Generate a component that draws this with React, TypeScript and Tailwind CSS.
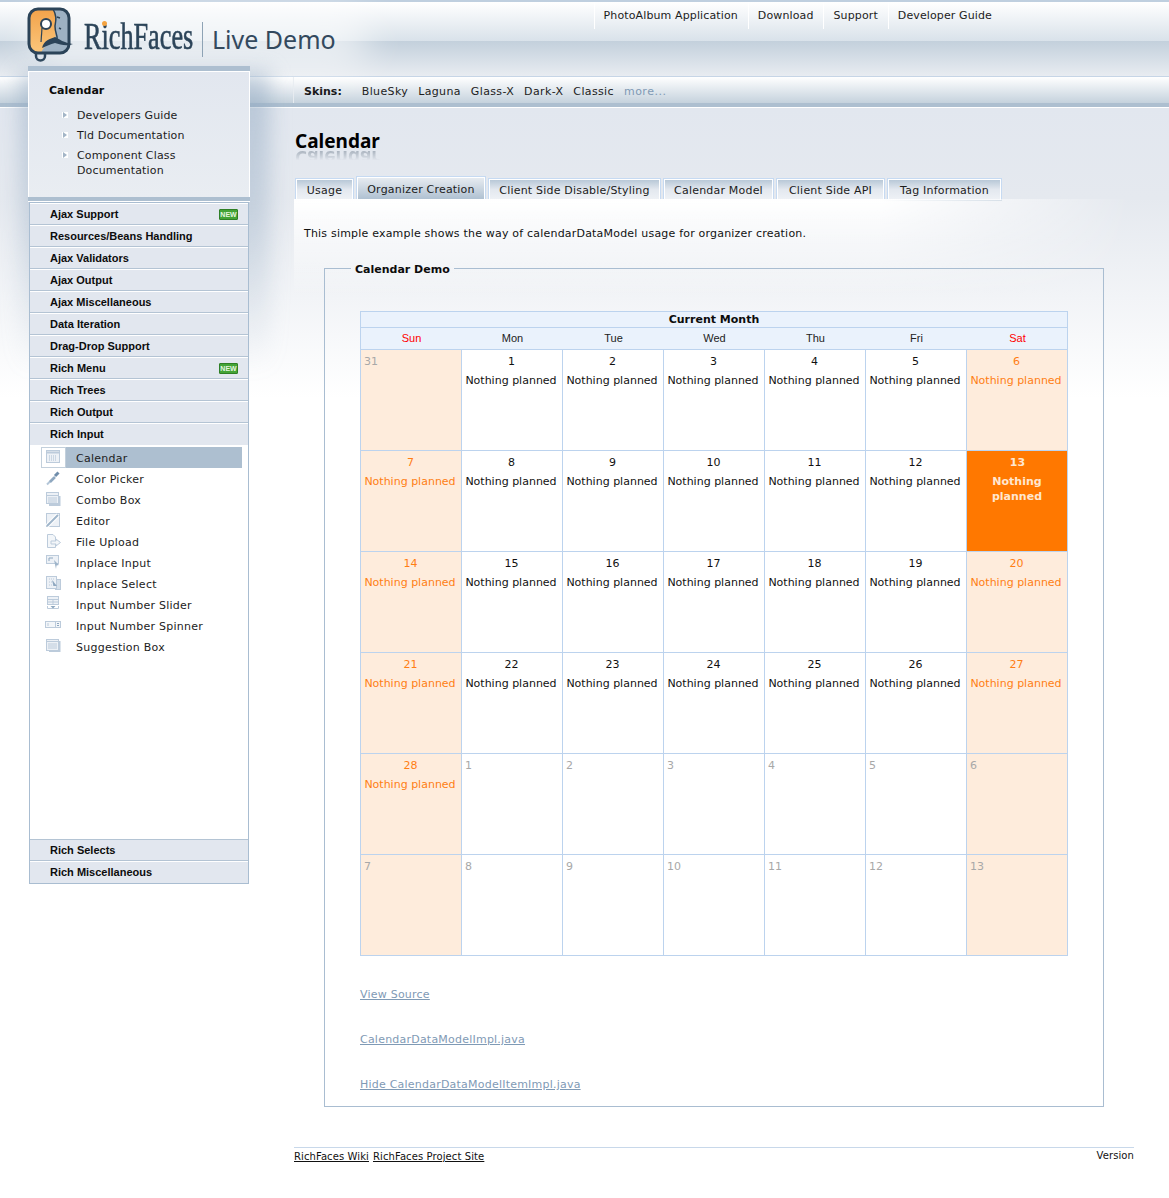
const topLinks = ['PhotoAlbum Application', 'Download', 'Support', 'Developer Guide']
const skins = ['BlueSky', 'Laguna', 'Glass-X', 'Dark-X', 'Classic']
const tabs = [
  { label: 'Usage', width: 'w-[59px]' },
  { label: 'Organizer Creation', width: 'w-[130px]' },
  { label: 'Client Side Disable/Styling', width: 'w-[173px]' },
  { label: 'Calendar Model', width: 'w-[111px]' },
  { label: 'Client Side API', width: 'w-[109px]' },
  { label: 'Tag Information', width: 'w-[115px]' },
]
const weekdays = ['Sun', 'Mon', 'Tue', 'Wed', 'Thu', 'Fri', 'Sat']

const groupsTop = [
  { name: 'Ajax Support', isNew: true },
  { name: 'Resources/Beans Handling' },
  { name: 'Ajax Validators' },
  { name: 'Ajax Output' },
  { name: 'Ajax Miscellaneous' },
  { name: 'Data Iteration' },
  { name: 'Drag-Drop Support' },
  { name: 'Rich Menu', isNew: true },
  { name: 'Rich Trees' },
  { name: 'Rich Output' },
]

const inputItems = [
  'Calendar',
  'Color Picker',
  'Combo Box',
  'Editor',
  'File Upload',
  'Inplace Input',
  'Inplace Select',
  'Input Number Slider',
  'Input Number Spinner',
  'Suggestion Box',
]

// six rows of the month grid, padded with the neighbouring months
const days = [
  31, 1, 2, 3, 4, 5, 6,
  7, 8, 9, 10, 11, 12, 13,
  14, 15, 16, 17, 18, 19, 20,
  21, 22, 23, 24, 25, 26, 27,
  28, 1, 2, 3, 4, 5, 6,
  7, 8, 9, 10, 11, 12, 13,
]

function Logo() {
  return (
    <svg width="50" height="58" viewBox="0 0 50 58" className="shrink-0">
      <defs>
        <linearGradient id="logoOrange" x1="0" y1="0" x2="0" y2="1">
          <stop offset="0" stopColor="#f2a24a" />
          <stop offset="1" stopColor="#fbc77c" />
        </linearGradient>
      </defs>
      <rect x="3" y="3" width="40" height="44" rx="9" fill="#9db1c3" />
      <path d="M12 3 H27 C31 10 30 14 29 20 C29 28 31 30 28 34 C22 38 18 40 15 47 H12 C6 47 3 44 3 38 V12 C3 6 6 3 12 3 Z" fill="url(#logoOrange)" />
      <path d="M27 3 C31 10 30 14 29 20 C29 28 32 30 31 33" fill="none" stroke="#2b4358" strokeWidth="1.5" />
      <path d="M31 11 l3 1 M33 22 l2 1" stroke="#2b4358" strokeWidth="1.5" />
      <rect x="3" y="3" width="40" height="44" rx="9" fill="none" stroke="#2b4358" strokeWidth="3" />
      <circle cx="20" cy="18" r="5" fill="#fff" stroke="#2b4358" strokeWidth="2" />
      <path d="M16 22 L15 36" stroke="#2b4358" strokeWidth="1.2" />
      <path d="M16 42 C18 34 24 33 29 31 C33 33 38 37 47 38 C40 41 34 38 29 37 C24 38 21 40 16 42 Z" fill="#2b4358" />
      <path d="M10 47 V50 C10 56 19 56 19 50 V47" fill="none" stroke="#2b4358" strokeWidth="2.5" />
    </svg>
  )
}

function MenuIcon({ index }: { index: number }) {
  const c = '#bccbdb'
  const fill = '#edf1f6'
  const shapes = [
    <g key="cal" fill="none" stroke={c}>
      <rect x="1.5" y="1.5" width="13" height="12" fill={fill} />
      <path d="M2 3.5 H14" strokeWidth="2" />
      <path d="M4 7 h8 M4 9 h8 M4 11 h8" strokeDasharray="1 1" stroke="#a9bdd1" />
    </g>,
    <g key="pick" fill="none">
      <path d="M2 14.5 L9 7.5" stroke="#b4c6d8" strokeWidth="2" />
      <path d="M5 12 L10 7" stroke="#8fa8c0" strokeWidth="2.5" />
      <path d="M10 6 L13.5 2.5" stroke="#6f8dab" strokeWidth="3" />
    </g>,
    <g key="combo" fill="none" stroke={c}>
      <rect x="1.5" y="1.5" width="12" height="11" fill={fill} />
      <path d="M1.5 4.5 H13.5 M3 7 H12 M3 9 H12 M3 11 H12" />
      <path d="M14.5 5 V14 H4" strokeWidth="2" />
    </g>,
    <g key="edit" fill="none" stroke={c}>
      <rect x="1.5" y="1.5" width="13" height="13" fill={fill} />
      <path d="M2 14 L13 3" stroke="#fff" strokeWidth="4" />
      <path d="M2 14 L13 3" stroke="#9fb5ca" strokeWidth="2" />
    </g>,
    <g key="upload" fill="none" stroke={c}>
      <path d="M2.5 1.5 H8 L10.5 4 V14.5 H2.5 Z" fill="#f3f6f9" />
      <path d="M6 8 H11 V6 L15.5 9.5 L11 13 V11 H6 Z" fill="#f3f6f9" />
    </g>,
    <g key="inplace" fill="none" stroke={c}>
      <rect x="1.5" y="1.5" width="12" height="8" fill={fill} />
      <path d="M4 7 V4 H8" stroke="#8fa8c0" />
      <path d="M9 6 L14 11 L11.5 11.5 L11 15 Z" fill="#9fb5ca" stroke="none" />
    </g>,
    <g key="select" fill="none" stroke={c}>
      <rect x="10.5" y="4.5" width="5" height="10" fill="#d6e0ea" />
      <rect x="1.5" y="1.5" width="10" height="12" fill={fill} />
      <path d="M4 4 H9 M4 7 H9 M4 10 H9" strokeDasharray="1 1" />
      <path d="M7 5 L12 11 L8.5 11 Z" fill="#8fa8c0" stroke="none" />
    </g>,
    <g key="slider" fill="none" stroke={c}>
      <rect x="2.5" y="0.5" width="11" height="8" fill={fill} />
      <path d="M2.5 3.5 H13.5 M8 3.5 V8.5 M2.5 6 H13.5" />
      <path d="M2.5 10 V12.5 H13.5 V10" />
      <path d="M5.5 10 H10.5 L8 12.5 Z" fill="#8fa8c0" stroke="none" />
    </g>,
    <g key="spinner" fill="none" stroke={c}>
      <rect x="0.5" y="4.5" width="15" height="6" fill="#f3f6f9" />
      <path d="M3 6 V9 M10.5 4.5 V10.5" />
      <path d="M12 6.5 H14 M12 8.5 H14" stroke="#8fa8c0" />
    </g>,
    <g key="suggest" fill="none" stroke={c}>
      <rect x="1.5" y="1.5" width="12" height="11" fill={fill} />
      <path d="M1.5 3.5 H13.5 M3 6 H12 M3 8 H12 M3 10 H12" />
      <path d="M14.5 3 V13 H4" strokeWidth="2" />
    </g>,
  ]
  return (
    <svg width="16" height="16" viewBox="0 0 16 16">
      {shapes[index]}
    </svg>
  )
}

function NewBadge() {
  return (
    <span className="flex h-[11px] w-[19px] items-center justify-center rounded-[1px] border border-[#2f7f25] bg-[#43a436] font-['Liberation_Sans',sans-serif] text-[7px] leading-none font-bold text-[#e6f6e0]">
      NEW
    </span>
  )
}

function GroupRow({ name, isNew, last, topLine }: { name: string; isNew?: boolean; last?: boolean; topLine?: boolean }) {
  return (
    <div
      className={`flex h-[22px] items-center justify-between border-t bg-[#e2e7ef] pr-[10px] pl-[20px] ${topLine ? 'border-t-[#b4c4d4]' : 'border-t-white'} ${last ? '' : 'border-b border-b-[#b4c4d4]'}`}
    >
      <span className="font-['Liberation_Sans',sans-serif] text-[11px] font-bold text-[#0c0c0c]">{name}</span>
      {isNew && <NewBadge />}
    </div>
  )
}

function Sidebar() {
  return (
    <aside className="relative z-10 mt-[-42px] ml-[28px] w-[222px] shrink-0">
      <div className="absolute top-[6px] right-[-20px] left-[-8px] -z-10 h-[300px] bg-gradient-to-b from-[#8ea6bf]/50 via-[#8ea6bf]/35 to-transparent blur-[10px]" />
      <div className="h-[5px] bg-[#adbfd0]" />
      <div className="h-[126px] border border-white border-b-0 bg-gradient-to-b from-[#e2e7ef] to-[#e9edf2] pt-[12px] pl-[20px]">
        <div className="text-[11px] leading-[14px] font-bold text-[#0c0c0c]">Calendar</div>
        <ul className="mt-[10px] flex flex-col gap-[5px] pl-[13px] text-[11px] leading-[15px] tracking-[.15px] text-[#1c1c1c]">
          {['Developers Guide', 'Tld Documentation', 'Component Class Documentation'].map((t) => (
            <li key={t} className="flex">
              <span className="mt-[4px] mr-[9px] flex h-[6px] w-[6px] shrink-0 items-center justify-center bg-white">
                <span className="h-0 w-0 border-y-[3px] border-l-[4px] border-y-transparent border-l-[#a3b5c7]" />
              </span>
              <span className="w-[130px]">{t}</span>
            </li>
          ))}
        </ul>
      </div>
      <div className="h-[4px] bg-[#adbfd0]" />
      <div className="h-[1px] bg-white" />
      <nav className="ml-[1px] w-[220px] border border-[#a9bdd1] bg-white">
        {groupsTop.map((g) => (
          <GroupRow key={g.name} name={g.name} isNew={g.isNew} />
        ))}
        <GroupRow name="Rich Input" last />
        <div className="h-[394px] pt-[2px]">
          {inputItems.map((item, i) => (
            <div key={item} className="ml-[11px] flex h-[21px] items-center text-[11px] tracking-[.25px] text-[#1c1c1c]">
              <span className={`flex h-[21px] w-[25px] shrink-0 items-center pb-[1px] ${i === 0 ? 'border border-[#c3d0dc] bg-white pl-[3px]' : 'pl-[4px]'}`}>
                <MenuIcon index={i} />
              </span>
              <span className={`mr-[6px] flex h-[21px] flex-1 items-center pt-[4px] pl-[10px] ${i === 0 ? 'bg-[#adbfd0]' : ''}`}>{item}</span>
            </div>
          ))}
        </div>
        <GroupRow name="Rich Selects" topLine />
        <GroupRow name="Rich Miscellaneous" last />
      </nav>
    </aside>
  )
}

function Calendar() {
  return (
    <div className="w-[708px] border-t border-l border-[#bcd3ee] bg-white">
      <div className="flex h-[16px] items-center justify-center border-r border-b border-[#bcd3ee] bg-[#eaf2fc] pt-[2px] text-[11px] font-bold text-[#0c0c0c]">
        Current Month
      </div>
      <div className="grid grid-cols-[repeat(7,101px)] border-r border-b border-[#bcd3ee] bg-[#eaf2fc]">
        {weekdays.map((d, i) => (
          <div
            key={d}
            className={`flex h-[21px] items-center justify-center pb-[1px] font-['Liberation_Sans',sans-serif] text-[11px] ${i === 0 || i === 6 ? 'text-[#ff0000]' : 'text-[#222222]'}`}
          >
            {d}
          </div>
        ))}
      </div>
      <div className="grid grid-cols-[repeat(7,101px)]">
        {days.map((n, i) => {
          const col = i % 7
          const weekend = col === 0 || col === 6
          const inMonth = i >= 1 && i <= 28
          const today = i === 13
          let tone = 'bg-white text-[#111111]'
          if (weekend && inMonth) tone = 'bg-[#feecdc] text-[#ff7e14]'
          if (weekend && !inMonth) tone = 'bg-[#feecdc] text-[#a8a8a8]'
          if (!weekend && !inMonth) tone = 'bg-white text-[#a8a8a8]'
          if (today) tone = 'bg-[#ff7800] text-[#ffe7d0] font-bold'
          return (
            <div
              key={i}
              className={`h-[101px] border-r border-b border-[#bcd3ee] pt-[5px] text-[11px] ${tone} ${inMonth ? 'pr-[3px] text-center' : 'pl-[3px]'} ${today ? 'pl-[3px]' : inMonth ? 'pl-[1px]' : ''}`}
            >
              <div className={`h-[14px] leading-[14px] ${inMonth ? 'pl-[1px]' : ''}`}>{n}</div>
              {inMonth && <div className="mt-[4px] leading-[15px]">Nothing planned</div>}
            </div>
          )
        })}
      </div>
    </div>
  )
}

function Content() {
  return (
    <main className="ml-[44px] w-[840px]">
      <div className="pl-[1px]">
        <h1 className="pt-[21px] font-['Noto_Sans',sans-serif] text-[19px] leading-[24px] font-bold text-black">Calendar</h1>
        <div
          aria-hidden="true"
          className="-mt-[7px] h-[24px] -scale-y-100 bg-gradient-to-t from-[#9aa5b1] from-10% to-transparent to-60% bg-clip-text font-['Noto_Sans',sans-serif] text-[19px] leading-[24px] font-bold text-transparent"
        >
          Calendar
        </div>
      </div>
      <div className="relative mt-[6px]">
        <div className="inline-flex items-end gap-[2px] border-b-2 border-[#adbfd0] pl-[1px] text-[11px] tracking-[.2px] text-[#1c1c1c]">
          {tabs.map((t, i) => (
            <div
              key={t.label}
              className={`-mb-[1px] flex items-center justify-center border border-b-0 border-[#c6daf2] shadow-[inset_0_1px_0_#fff,inset_1px_0_0_#fff,inset_-1px_0_0_#fff] ${t.width} ${i === 1 ? 'h-[24px] bg-gradient-to-b from-[#e9edf2] to-[#adbfd0] pt-[4px]' : 'h-[22px] bg-gradient-to-b from-[#b4c5d5] via-[#e3e8ef] to-[#eff2f6] pt-[3px]'}`}
            >
              {t.label}
            </div>
          ))}
        </div>
        <div className="absolute top-[23px] right-0 left-0 h-[100px] bg-gradient-to-b from-white to-transparent [mask-image:linear-gradient(90deg,#000_70%,transparent)]" />
      </div>
      <div className="relative">
        <p className="pt-[26px] pl-[10px] text-[11px] leading-[13px] tracking-[.2px] text-[#111111]">
          This simple example shows the way of calendarDataModel usage for organizer creation.
        </p>
        <fieldset className="mt-[22px] ml-[30px] w-[780px] border border-[#a9bdd1] pb-[15px] pl-[35px]">
          <legend className="-ml-[9px] translate-y-px px-[4px] text-[11px] leading-[13px] font-bold text-[#0c0c0c]">Calendar Demo</legend>
          <div className="pt-[36px]">
            <Calendar />
          </div>
          <div className="mt-[32px] flex flex-col gap-[32px] text-[11px] leading-[13px] tracking-[.22px] text-[#7f9ab5]">
            <a className="w-fit underline">View Source</a>
            <a className="w-fit underline">CalendarDataModelImpl.java</a>
            <a className="w-fit underline">Hide CalendarDataModelItemImpl.java</a>
          </div>
        </fieldset>
        <footer className="mt-[40px] flex justify-between border-t border-[#c8d8ea] pt-[2px] text-[10px] leading-[14px] tracking-[.1px] text-[#111111]">
          <div className="flex gap-[4px]">
            <a className="underline">RichFaces Wiki</a>
            <a className="underline">RichFaces Project Site</a>
          </div>
          <span className="-mt-[1px]">Version</span>
        </footer>
      </div>
    </main>
  )
}

export default function App() {
  return (
    <div className="relative h-[1198px] overflow-hidden bg-white font-['DejaVu_Sans',sans-serif]">
      {/* Header */}
      <header className="relative h-[108px]">
        <div className="h-[2px] bg-[#bfcfdf]" />
        <div className="relative h-[74px] bg-[linear-gradient(#ffffff_0,#d9e2ea_39px,#c3d0dc_39px,#e8ecf1_74px)]">
          <div className="absolute top-[6px] left-[30px] h-[62px] w-[340px] rounded-full bg-white/60 blur-[18px]" />
          <div className="relative flex h-full justify-between">
            <div className="ml-[26px] flex pt-[4px]">
              <Logo />
              <div className="relative ml-[8px] w-[108px] shrink-0">
                <span className="absolute top-[8px] left-0 origin-left scale-x-[.69] font-['Liberation_Serif',serif] text-[38px] leading-[44px] whitespace-nowrap text-[#2c4459] [-webkit-text-stroke:0.6px_#2c4459]">
                  RichFaces
                </span>
                <span className="absolute top-[15px] left-[18px] h-[5px] w-[5px] rounded-full bg-[#f4a340]" />
              </div>
              <div className="mt-[16px] ml-[10px] h-[35px] w-px bg-[#8ea3b5]" />
              <span className="mt-[15px] ml-[9px] font-['Noto_Sans',sans-serif] text-[25px] leading-[36px] text-[#33495e]">Live Demo</span>
            </div>
            <div className="mr-[167px] flex h-[27px] items-center text-[11px] tracking-[.12px] text-[#1c1c1c]">
              {topLinks.map((t) => (
                <span key={t} className="flex h-[27px] items-center border-l border-white pt-[1px] pr-[10px] pl-[9px]">
                  {t}
                </span>
              ))}
            </div>
          </div>
        </div>
        <div className="h-[1px] bg-[#c6d5e6]" />
        <div className="flex h-[26px] items-center bg-gradient-to-b from-white to-[#c5d2dd] pl-[293px] text-[11px] text-[#1c1c1c]">
          <div className="flex h-full items-center border-l border-[#e6ebf0] pt-[5px] pl-[10px]">
            <b className="mr-[20px] text-[#0c0c0c]">Skins:</b>
            <div className="flex gap-[10px] tracking-[.36px]">
              {skins.map((s) => (
                <span key={s}>{s}</span>
              ))}
              <span className="tracking-[.5px] text-[#7f9ab5]">more...</span>
            </div>
          </div>
        </div>
        <div className="h-[4px] bg-[#adbfd0]" />
        <div className="h-[1px] bg-white" />
      </header>
      {/* Body */}
      <div className="h-[1090px] bg-[linear-gradient(#e2e7ef_0,#e5e9ef_90px,#ffffff_290px)]">
        <div className="flex items-start">
          <Sidebar />
          <Content />
        </div>
      </div>
    </div>
  )
}
